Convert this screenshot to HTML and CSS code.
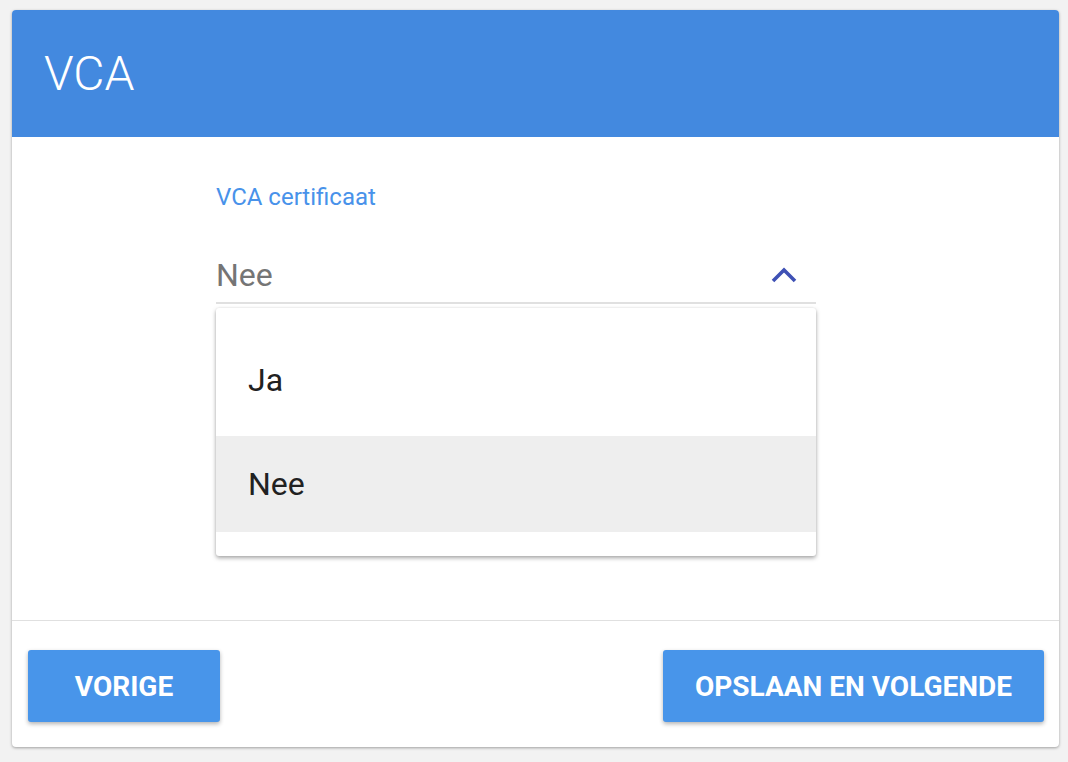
FILE: index.html
```html
<!DOCTYPE html>
<html lang="nl">
<head>
    <meta charset="UTF-8">
    <meta name="viewport" content="width=device-width, initial-scale=1.0">
    <link rel="stylesheet" href="styles.css">
    <title>VCA</title>
</head>
<body>

    <div class="card">
        <div class="card-header">
            <h1>VCA</h1>
        </div>

        <div class="card-body">
            <div class="field">
                <label class="field-label">VCA certificaat</label>
                <div class="select">
                    <span class="select-value">Nee</span>
                    <svg class="select-arrow" width="28" height="18" viewBox="0 0 28 18">
                        <polyline points="3,15 14,4 25,15" fill="none" stroke="#3f51b5" stroke-width="3.6"/>
                    </svg>
                </div>

                <ul class="menu">
                    <li class="menu-item">Ja</li>
                    <li class="menu-item selected">Nee</li>
                </ul>
            </div>
        </div>

        <div class="card-footer">
            <button type="button" class="btn">Vorige</button>
            <button type="button" class="btn">Opslaan en volgende</button>
        </div>
    </div>

</body>
</html>
```

FILE: styles.css
```css
body {
    margin: 0;
    padding: 10px 9px 14px 12px;
    background-color: #f2f2f2;
    font-family: Roboto, "Liberation Sans", sans-serif;
}

.card {
    background-color: #fff;
    border-radius: 4px;
    box-shadow: 0 1px 3px rgba(0, 0, 0, 0.35);
    overflow: hidden;
}

.card-header {
    background-color: #4389df;
    height: 127px;
    display: flex;
    align-items: center;
    padding-left: 32px;
}

.card-header h1 {
    margin: 0;
    color: #fff;
    font-size: 48px;
    font-weight: 300;
}

.card-body {
    height: 483px;
    border-bottom: 1px solid #e0e0e0;
}

.field {
    position: relative;
    width: 600px;
    margin-left: 204px;
    padding-top: 46px;
}

.field-label {
    display: block;
    color: #4892ea;
    font-size: 24px;
    line-height: 28px;
}

.select {
    margin-top: 38px;
    height: 53px;
    border-bottom: 2px solid #e0e0e0;
    display: flex;
    align-items: center;
    justify-content: space-between;
}

.select-value {
    color: #757575;
    font-size: 32px;
    margin-top: -2px;
}

.select-arrow {
    margin-right: 18px;
    margin-top: -2px;
}

.menu {
    position: absolute;
    top: 171px;
    left: 0;
    width: 600px;
    margin: 0;
    padding: 24px 0;
    list-style: none;
    background-color: #fff;
    border-radius: 3px;
    box-shadow: 0 2px 4px rgba(0, 0, 0, 0.35), 0 0 2px rgba(0, 0, 0, 0.08);
    display: flex;
    flex-direction: column;
    gap: 8px;
}

.menu-item {
    height: 96px;
    display: flex;
    align-items: center;
    padding-left: 32px;
    color: #212121;
    font-size: 32px;
}

.menu-item.selected {
    background-color: #eeeeee;
}

.card-footer {
    display: flex;
    justify-content: space-between;
    padding: 29px 15px 25px 16px;
}

.btn {
    height: 72px;
    min-width: 192px;
    padding: 0 32px;
    background-color: #4895ea;
    color: #fff;
    border: none;
    border-radius: 3px;
    box-shadow: 0 2px 4px rgba(0, 0, 0, 0.3);
    font-family: Roboto, "Liberation Sans", sans-serif;
    font-size: 28px;
    font-weight: 700;
    text-transform: uppercase;
    cursor: pointer;
}
```
